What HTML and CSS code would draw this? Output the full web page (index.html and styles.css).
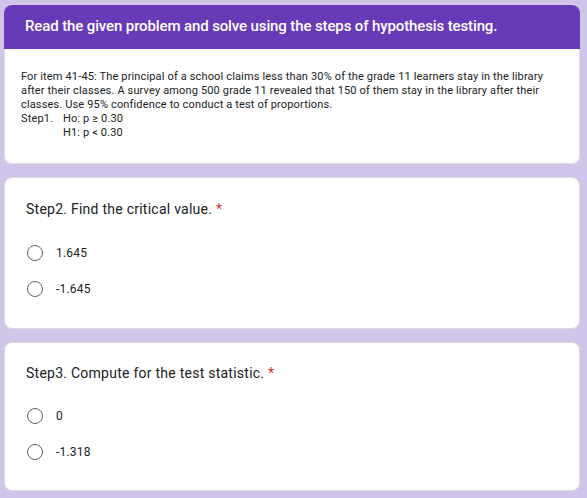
FILE: index.html
```html
<!DOCTYPE html>
<html>
<head>
<meta charset="utf-8">
<link rel="stylesheet" href="styles.css">
</head>
<body>
<div class="page">
  <section class="card intro">
    <div class="intro-head">Read the given problem and solve using the steps of hypothesis testing.</div>
    <div class="intro-body">
      <p class="desc">For item 41-45: The principal of a school claims less than 30% of the grade 11 learners stay in the library after their classes. A survey among 500 grade 11 revealed that 150 of them stay in the library after their classes. Use 95% confidence to conduct a test of proportions.</p>
      <div class="hyp"><span class="hyp-label">Step1.</span><span>Ho: p ≥ 0.30</span></div>
      <div class="hyp"><span class="hyp-label"></span><span>H1: p &lt; 0.30</span></div>
    </div>
  </section>

  <section class="card question">
    <div class="q-title">Step2. Find the critical value. <span class="req">*</span></div>
    <div class="options">
      <label class="option"><span class="radio"></span><span class="opt-text">1.645</span></label>
      <label class="option"><span class="radio"></span><span class="opt-text">-1.645</span></label>
    </div>
  </section>

  <section class="card question tight">
    <div class="q-title">Step3. Compute for the test statistic. <span class="req">*</span></div>
    <div class="options">
      <label class="option"><span class="radio"></span><span class="opt-text">0</span></label>
      <label class="option"><span class="radio"></span><span class="opt-text">-1.318</span></label>
    </div>
  </section>
</div>
</body>
</html>
```

FILE: styles.css
```css
html, body {
  margin: 0;
  padding: 0;
}
body {
  background: #d1c4e9;
  font-family: Roboto, "Liberation Sans", Arial, sans-serif;
  color: #202124;
  width: 587px;
  height: 498px;
  overflow: hidden;
}
.page {
  display: flex;
  flex-direction: column;
  gap: 13px;
  padding: 5px 7px 0 4px;
}
.card {
  background: #fff;
  border: 1px solid #dadce0;
  border-radius: 8px;
  overflow: hidden;
}
.intro {
  border: none;
}
.intro-head {
  background: #673ab7;
  color: #fff;
  height: 44px;
  display: flex;
  align-items: center;
  padding-left: 21px;
  padding-bottom: 2px;
  box-sizing: border-box;
  font-size: 15px;
  font-weight: 500;
  letter-spacing: -0.12px;
}
.intro-body {
  padding: 21px 20px 23px 16px;
  font-size: 11px;
  line-height: 14px;
  letter-spacing: 0.15px;
  color: #202124;
  border: 1px solid #dadce0;
  border-top: none;
  border-radius: 0 0 8px 8px;
}
.desc {
  margin: 0;
}
.hyp {
  display: flex;
}
.hyp-label {
  width: 42px;
}
.question {
  padding: 21px 20px 21px 21px;
}
.question.tight {
  padding-top: 20px;
  padding-bottom: 20px;
}
.question.tight .options {
  margin-top: 15px;
}
.q-title {
  font-size: 14px;
  line-height: 20px;
  letter-spacing: 0.25px;
}
.req {
  color: #d93025;
}
.options {
  display: flex;
  flex-direction: column;
  margin-top: 16px;
}
.option {
  display: flex;
  align-items: center;
  height: 36px;
  gap: 13px;
}
.radio {
  box-sizing: border-box;
  width: 16px;
  height: 16px;
  border: 1.5px solid #5f6368;
  border-radius: 50%;
  margin-left: 1px;
}
.opt-text {
  font-size: 12px;
  letter-spacing: 0.2px;
}
```
